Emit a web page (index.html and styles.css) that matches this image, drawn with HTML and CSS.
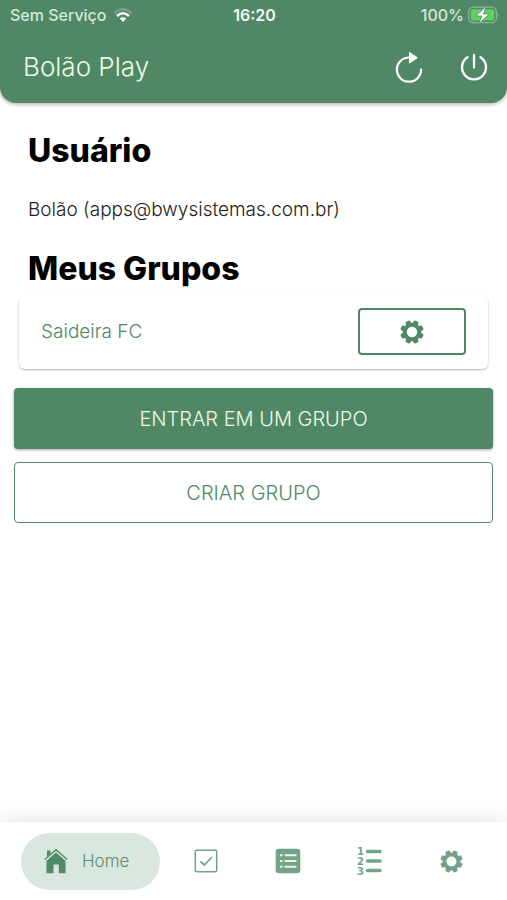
FILE: index.html
```html
<!DOCTYPE html>
<html lang="pt-BR">
<head>
<meta charset="utf-8">
<meta name="viewport" content="width=device-width, initial-scale=1">
<title>Bolão Play</title>
<link rel="stylesheet" href="styles.css">
</head>
<body>
<svg class="defs" aria-hidden="true">
  <path id="tooth" d="M9.600 4.500 10.400 1h3.200L14.400 4.500z" fill="currentColor" stroke="currentColor" stroke-width="1.400" stroke-linejoin="round"/>
  <symbol id="gear" viewBox="0 0 24 24">
    <circle cx="12" cy="12" r="7.200" fill="none" stroke="currentColor" stroke-width="4"/>
    <use href="#tooth" transform="rotate(22.500 12 12)"/>
    <use href="#tooth" transform="rotate(67.500 12 12)"/>
    <use href="#tooth" transform="rotate(112.500 12 12)"/>
    <use href="#tooth" transform="rotate(157.500 12 12)"/>
    <use href="#tooth" transform="rotate(202.500 12 12)"/>
    <use href="#tooth" transform="rotate(247.500 12 12)"/>
    <use href="#tooth" transform="rotate(292.500 12 12)"/>
    <use href="#tooth" transform="rotate(337.500 12 12)"/>
  </symbol>
</svg>
<header class="header">
  <div class="status">
    <div class="status-left">
      <span>Sem Serviço</span>
      <svg width="20" height="15" viewBox="0 0 20 15" fill="none" stroke-width="2.4">
        <path d="M1.5 5.2Q10-2.5 18.5 5.2" stroke="#fff" opacity=".2"/>
        <path d="M4 8Q10 2.6 16 8" stroke="#fff"/>
        <path d="M6.8 10.6Q10 8 13.2 10.6L10 14z" fill="#fff"/>
      </svg>
    </div>
    <strong class="clock">16:20</strong>
    <div class="status-right">
      <span>100%</span>
      <svg width="31" height="18" viewBox="0 0 31 18">
        <rect x=".7" y="1.2" width="27.600" height="15.400" rx="4.5" fill="none" stroke="#8fb49e" stroke-width="1.3"/>
        <rect x="2.8" y="3.300" width="23.4" height="11.200" rx="2.6" fill="#62cf63"/>
        <path d="M29.500 6.6q2 2.4 0 4.8z" fill="#8fb49e"/>
        <path d="M18.200.3 8 10h5.700l-2.800 7.700L21.400 8h-5.900z" fill="#fff" stroke="#508865" stroke-width=".8"/>
      </svg>
    </div>
  </div>
  <div class="toolbar">
    <h1 class="title">Bolão Play</h1>
    <button class="icon-button" type="button" aria-label="Atualizar">
      <svg width="28" height="32" viewBox="0 0 28 32">
        <path d="M14 6.500A12.100 12.100 0 1 0 26.100 18.600" fill="none" stroke="#fff" stroke-width="2.2" stroke-linecap="round"/>
        <path d="M14 2v9.600q0 1.200 1 .6l7-4.600q1-.8 0-1.600L15 1.200Q14 .8 14 2z" fill="#fff"/>
      </svg>
    </button>
    <button class="icon-button" type="button" aria-label="Sair">
      <svg width="28" height="32" viewBox="0 0 28 32" fill="none" stroke="#fff" stroke-width="2.300" stroke-linecap="round">
        <path d="M14 4v12.500M7.500 6.200A12 12 0 1 0 20.500 6.200"/>
      </svg>
    </button>
  </div>
</header>
<main class="content">
  <h2 class="heading">Usuário</h2>
  <p class="user">Bolão (apps@bwysistemas.com.br)</p>
  <h2 class="heading">Meus Grupos</h2>
  <section class="group">
    <a class="group-name" href="#saideira">Saideira FC</a>
    <button class="group-settings" type="button" aria-label="Configurar Saideira FC">
      <svg width="24" height="24"><use href="#gear"/></svg>
    </button>
  </section>
  <button class="button button-solid" type="button">ENTRAR EM UM GRUPO</button>
  <button class="button button-outline" type="button">CRIAR GRUPO</button>
</main>
<nav class="tabs">
  <a class="tab tab-active" href="#home">
    <svg width="24" height="26" viewBox="0 0 24 26" fill="#4f8a68">
      <path d="M.8 11.500 12 1.800l11.200 9.700" fill="none" stroke="#4f8a68" stroke-width="1.500"/>
      <path d="M3 2.500h3.500v3.200L3 8.700zM12 4.500l9.500 8.200V25.300h-6.700v-8.800H9.500v8.800H2.500V12.700z"/>
    </svg>
    <span>Home</span>
  </a>
  <a class="tab" href="#palpites" aria-label="Palpites">
    <svg width="24" height="24" viewBox="0 0 24 24" fill="none" stroke="currentColor" stroke-linejoin="round" stroke-linecap="round">
      <rect x="1.300" y="1.300" width="21.400" height="21.400" rx="1.500" stroke-width="1.500"/>
      <path d="M7 12.800l3.400 3.200L17.500 8.500" stroke-width="1.800"/>
    </svg>
  </a>
  <a class="tab" href="#jogos" aria-label="Jogos">
    <svg width="26" height="26" viewBox="0 0 26 26">
      <rect x=".7" y=".7" width="24.600" height="24.600" rx="3" fill="currentColor"/>
      <path d="M5 7.200h2.500M9.500 7.200h12M5 13h2.500M9.500 13h12M5 18.800h2.500M9.500 18.800h12" stroke="#eef4f0" stroke-width="2"/>
    </svg>
  </a>
  <a class="tab" href="#classificacao" aria-label="Classificação">
    <svg width="24" height="32" viewBox="0 0 24 32">
      <g class="digits"><text x="-1" y="10">1</text><text x="-1" y="20">2</text><text x="-1" y="30">3</text></g>
      <path d="M9.500 6.500h12.500M9.500 16h12.500M9.500 25.500h12.500" stroke="currentColor" stroke-width="3.400" stroke-linecap="round"/>
    </svg>
  </a>
  <a class="tab" href="#ajustes" aria-label="Ajustes">
    <svg width="23" height="23"><use href="#gear"/></svg>
  </a>
</nav>
</body>
</html>
```
FILE: styles.css
```css
* {
  box-sizing: border-box;
}

body {
  margin: 0;
  min-height: 100vh;
  display: flex;
  flex-direction: column;
  background: #fff;
  color: #222;
  font-family: Inter, "Liberation Sans", sans-serif;
  font-weight: 300;
}

svg {
  display: block;
  flex: none;
  overflow: visible;
}

button {
  font: inherit;
  cursor: pointer;
}

a {
  color: inherit;
  text-decoration: none;
}

.defs {
  position: absolute;
  width: 0;
  height: 0;
  overflow: hidden;
}

.header {
  background: #508865;
  color: #fff;
  border-radius: 0 0 16px 16px;
  box-shadow: 0 1px 4px rgba(0, 0, 0, .35);
}

.status {
  display: grid;
  grid-template-columns: 1fr auto 1fr;
  align-items: center;
  height: 30px;
  padding: 0 8px 0 10px;
  font-size: 16px;
  font-weight: 500;
  color: #d5e8da;
}

.status-left,
.status-right {
  display: flex;
  align-items: center;
  gap: 6px;
}

.status-right {
  justify-content: flex-end;
  gap: 4px;
}

.clock {
  font-weight: 600;
  color: #f2faf2;
}

.toolbar {
  display: flex;
  align-items: center;
  gap: 37px;
  height: 73px;
  padding: 0 19px 0 23px;
}

.title {
  flex: 1;
  margin: 0;
  font-size: 26px;
  font-weight: 300;
  color: #eefbe9;
}

.icon-button {
  padding: 0;
  border: 0;
  background: none;
}

.content {
  flex: 1;
  padding: 29px 14px;
}

.heading {
  margin: 0 14px;
  font-size: 32px;
  line-height: 38px;
  font-weight: 800;
  color: #000;
}

.user {
  margin: 28px 14px;
  font-size: 19px;
  line-height: 24px;
}

.group {
  display: flex;
  align-items: center;
  justify-content: space-between;
  margin: 8px 5px 19px;
  padding: 12px 22px 14px;
  border-radius: 6px;
  box-shadow: 0 1px 2px rgba(0, 0, 0, .3);
}

.group-name {
  font-size: 19px;
  color: #508865;
}

.group-settings {
  display: flex;
  align-items: center;
  justify-content: center;
  width: 108px;
  height: 47px;
  border: 2px solid #508865;
  border-radius: 4px;
  background: #fff;
  color: #4f8a68;
}

.button {
  display: block;
  width: 100%;
  height: 61px;
  border-radius: 4px;
  font-size: 20px;
}

.button-solid {
  margin-bottom: 13px;
  border: 0;
  background: #508865;
  color: #eefbe9;
  box-shadow: 0 1px 3px rgba(0, 0, 0, .35);
}

.button-outline {
  border: 1px solid #508865;
  background: #fff;
  color: #508865;
}

.tabs {
  display: flex;
  align-items: center;
  height: 78px;
  padding: 0 15px 0 21px;
  background: #fff;
  box-shadow: 0 0 24px rgba(0, 0, 0, .12);
  color: #72a387;
}

.tab {
  display: flex;
  flex: 1;
  align-items: center;
  justify-content: center;
}

.tab-active {
  flex: none;
  gap: 14px;
  height: 57px;
  margin-right: 5px;
  padding: 0 31px 0 23px;
  border-radius: 29px;
  background: #dae7df;
  font-size: 17px;
  color: #5f8a72;
}

.digits {
  font: 700 10px "DejaVu Sans", sans-serif;
  fill: currentColor;
}
```
